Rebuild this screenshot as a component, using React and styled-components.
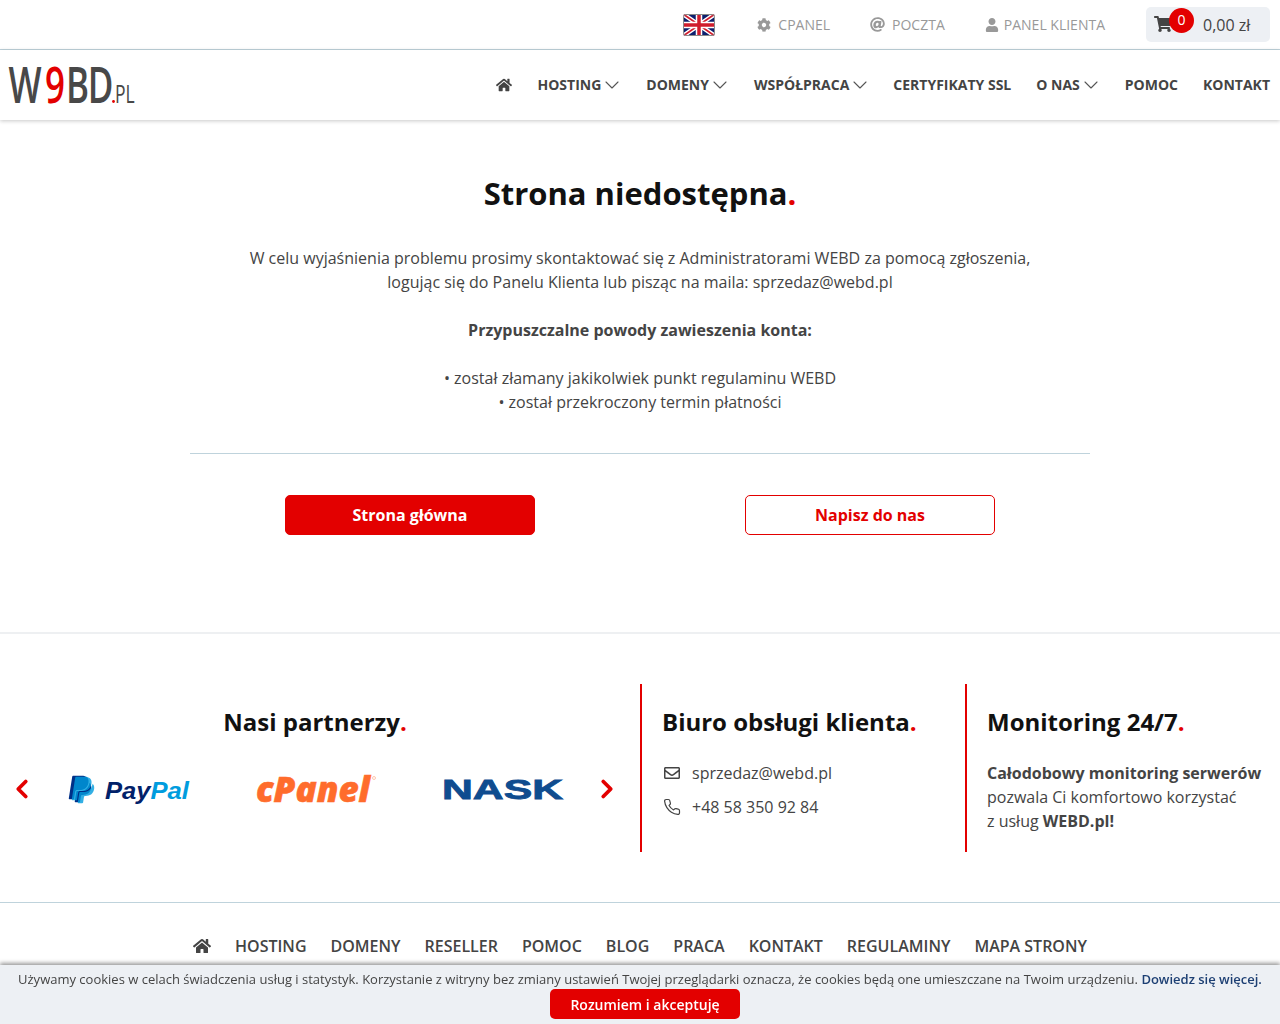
import React from 'react';
import styled, { createGlobalStyle } from 'styled-components';
import { FaHome, FaCog, FaAt, FaUser, FaShoppingCart, FaRegEnvelope, FaPaypal } from 'react-icons/fa';
import { FiChevronDown, FiPhone, FiChevronLeft, FiChevronRight } from 'react-icons/fi';

const RED = '#e30000';
const LINE = '#bfd3dc';

const GlobalStyle = createGlobalStyle`
	html, body { margin: 0; padding: 0; background: #fff; }
	body { font-family: "Open Sans", "Liberation Sans", sans-serif; font-size: 16px; line-height: 24px; color: #444; }
	* { box-sizing: border-box; }
`;

const TopBar = styled.div`
	height: 50px;
	border-bottom: 1px solid ${LINE};
	display: flex;
	justify-content: flex-end;
	align-items: center;
	padding-right: 10px;
`;

const Flag = styled.svg`
	width: 32px;
	height: 22px;
	margin-right: 42px;
	margin-top: 1px;
`;

const TopLink = styled.a`
	display: flex;
	align-items: center;
	gap: ${p => p.$gap || 7}px;
	font-size: 14px;
	color: #999;
	margin-right: ${p => p.$right || 40}px;
	svg { font-size: ${p => p.$icon || 14}px; }
`;

const Cart = styled.div`
	position: relative;
	width: 124px;
	height: 35px;
	margin-top: -1px;
	background: #edf0f4;
	border-radius: 5px;
	display: flex;
	align-items: center;
	padding-left: 8px;
	svg { font-size: 18px; color: #444; }
`;

const CartBadge = styled.span`
	position: absolute;
	left: 23px;
	top: 1px;
	width: 25px;
	height: 25px;
	border-radius: 50%;
	background: ${RED};
	color: #fff;
	font-size: 14px;
	display: flex;
	align-items: center;
	justify-content: center;
`;

const CartPrice = styled.span`
	margin-left: 31px;
	margin-top: 1px;
	font-size: 16px;
`;

const NavBar = styled.div`
	height: 70px;
	display: flex;
	align-items: center;
	justify-content: space-between;
	padding: 0 10px;
	box-shadow: 0 1px 4px rgba(0,0,0,.22);
	position: relative;
`;

const Logo = styled.svg`
	width: 126px;
	height: 70px;
	display: block;
	overflow: visible;
`;

const Nav = styled.nav`
	display: flex;
	align-items: center;
`;

const NavItem = styled.a`
	display: flex;
	align-items: center;
	font-size: 14px;
	font-weight: 700;
	color: #444;
	margin-left: ${p => p.$left || 25}px;
	svg { font-size: 16px; }
	svg.chev { margin-left: -1px; font-size: 24px; stroke-width: 1.1; color: #555; }
`;

const Main = styled.main`
	width: 900px;
	margin: 0 auto;
	padding-top: 52px;
	height: 512px;
	text-align: center;
`;

const Title = styled.h1`
	margin: 0 0 32px;
	font-size: 31px;
	line-height: 42px;
	font-weight: 700;
	color: #111;
`;

const Dot = styled.span`
	color: ${RED};
`;

const Para = styled.p`
	margin: 0 0 24px;
	b { font-weight: 700; }
`;

const Divider = styled.hr`
	border: 0;
	border-top: 1px solid ${LINE};
	margin: 39px 0 41px;
`;

const Buttons = styled.div`
	display: flex;
	justify-content: center;
	gap: 210px;
`;

const Button = styled.a`
	width: 250px;
	height: 40px;
	border-radius: 5px;
	border: 1px solid ${RED};
	background: ${p => p.$outline ? '#fff' : RED};
	color: ${p => p.$outline ? RED : '#fff'};
	font-weight: 700;
	font-size: 16px;
	display: flex;
	align-items: center;
	justify-content: center;
`;

const Info = styled.section`
	border-top: 2px solid #eef0f2;
	height: 270px;
	padding-top: 50px;
	display: grid;
	grid-template-columns: 640px 325px 1fr;
	align-items: start;
`;

const Column = styled.div`
	height: 168px;
	padding-left: 20px;
	border-left: 2px solid ${RED};
`;

const Heading = styled.h2`
	margin: 21px 0 22px;
	font-size: 24px;
	line-height: 34px;
	font-weight: 700;
	color: #111;
	text-align: ${p => p.$center ? 'center' : 'left'};
`;

const Partners = styled.div`
	height: 168px;
	padding-right: 10px;
`;

const Carousel = styled.div`
	display: grid;
	grid-template-columns: 44px 1fr 44px;
	align-items: center;
	height: 44px;
	margin: 28px 1px 0 0;
`;

const Arrow = styled.span`
	display: flex;
	justify-content: center;
	color: ${RED};
	svg { font-size: 30px; stroke-width: 3; }
`;

const Logos = styled.div`
	display: flex;
	justify-content: space-between;
	align-items: center;
	padding: 0 22px 0 25px;
`;

const LogoBox = styled.svg`
	width: 121px;
	height: 36px;
	display: block;
	overflow: visible;
`;

const ContactRow = styled.div`
	display: flex;
	align-items: center;
	height: 24px;
	margin-bottom: 10px;
	svg { width: 16px; height: 16px; margin: 0 12px 0 2px; color: #444; }
	svg.phone { width: 18px; height: 18px; margin: 0 11px 0 1px; stroke-width: 1.6; }
`;

const BlockText = styled.p`
	margin: 0;
	b { font-weight: 700; }
`;

const FooterNav = styled.footer`
	border-top: 1px solid ${LINE};
	height: 122px;
	display: flex;
	justify-content: center;
	gap: 24px;
	padding-top: 31px;
`;

const FooterLink = styled.a`
	font-size: 16px;
	font-weight: 600;
	color: #444;
	height: 24px;
	display: flex;
	align-items: center;
	svg { font-size: 18px; }
`;

const CookieBar = styled.div`
	position: fixed;
	left: 0;
	right: 0;
	bottom: 0;
	height: 59px;
	background: #edf0f4;
	box-shadow: 0 -2px 4px rgba(0,0,0,.4);
	text-align: center;
	font-size: 13px;
	line-height: 18px;
	padding-top: 5px;
	color: #444;
	a { color: #1d3f73; font-weight: 600; }
`;

const CookieButton = styled.button`
	display: block;
	width: 190px;
	height: 30px;
	margin: 1px auto 0 550px;
	background: ${RED};
	border: 0;
	border-radius: 5px;
	color: #fff;
	font-family: inherit;
	font-size: 14px;
	font-weight: 600;
`;

const UnionJack = () => (
	<Flag viewBox="0 0 32 22">
		<defs><clipPath id="flag-clip"><rect width="32" height="22" rx="3" /></clipPath></defs>
		<g clipPath="url(#flag-clip)">
			<rect width="32" height="22" fill="#0d1f6e" />
			<path d="M0 0L32 22M32 0L0 22" stroke="#fff" strokeWidth="4.5" />
			<path d="M0 0L32 22M32 0L0 22" stroke="#d01c2c" strokeWidth="1.8" />
			<path d="M16 0V22M0 11H32" stroke="#fff" strokeWidth="6.5" />
			<path d="M16 0V22M0 11H32" stroke="#d01c2c" strokeWidth="3.5" />
		</g>
		<rect x=".5" y=".5" width="31" height="21" rx="2.5" fill="none" stroke="#888" />
	</Flag>
);

// one text element, the tspans only set colour and place of each letter
const WebdLogo = () => (
	<Logo viewBox="0 0 126 70">
		<text transform="translate(0 53) scale(.7 1)" fontFamily="'Open Sans', sans-serif" fontWeight="600" fontSize="50" fill="#484848">
			<tspan x="-2">W</tspan>
			<tspan x="50" fill={RED}>9</tspan>
			<tspan x="80">B</tspan>
			<tspan x="111">D</tspan>
			<tspan x="150" fontSize="25" fontWeight="400">PL</tspan>
		</text>
		<circle cx="103.5" cy="51.5" r="1.4" fill={RED} />
	</Logo>
);

const PayPalLogo = () => (
	<LogoBox viewBox="0 0 121 36">
		<FaPaypal x="-4" y="3" size={30} color="#003087" />
		<FaPaypal x="-1" y="4" size={30} color="#009cde" opacity=".8" />
		<text x="36" y="28" fontFamily="'Liberation Sans', sans-serif" fontWeight="700" fontStyle="italic" fontSize="24" fill="#012169" textLength="84" lengthAdjust="spacingAndGlyphs">
			Pay<tspan fill="#009cde">Pal</tspan>
		</text>
	</LogoBox>
);

const CpanelLogo = () => (
	<LogoBox viewBox="0 0 121 36">
		<text x="0" y="31" textLength="114" lengthAdjust="spacingAndGlyphs" fontFamily="'Open Sans', sans-serif" fontWeight="800" fontStyle="italic" fontSize="36" stroke="#ff6c2c" strokeWidth=".6" fill="#ff6c2c">cPanel</text>
		<circle cx="118" cy="7" r="1.5" fill="none" stroke="#ffb08c" strokeWidth=".7" />
	</LogoBox>
);

const NaskLogo = () => (
	<LogoBox viewBox="0 0 121 36">
		<text x="0" y="28" textLength="121" lengthAdjust="spacingAndGlyphs" fontFamily="'Liberation Sans', sans-serif" fontWeight="700" fontSize="28" stroke="#0f4c8f" strokeWidth=".8" fill="#0f4c8f">NASK</text>
	</LogoBox>
);

const Chevron = () => <FiChevronDown className="chev" />;

export default function App() {
	return (
		<>
			<GlobalStyle />
			<TopBar>
				<UnionJack />
				<TopLink><FaCog />CPANEL</TopLink>
				<TopLink $icon={15}><FaAt />POCZTA</TopLink>
				<TopLink $gap={5} $right={41}><FaUser />PANEL KLIENTA</TopLink>
				<Cart>
					<FaShoppingCart />
					<CartBadge>0</CartBadge>
					<CartPrice>0,00 zł</CartPrice>
				</Cart>
			</TopBar>
			<NavBar>
				<WebdLogo />
				<Nav>
					<NavItem><FaHome /></NavItem>
					<NavItem>HOSTING<Chevron /></NavItem>
					<NavItem $left={22}>DOMENY<Chevron /></NavItem>
					<NavItem $left={22}>WSPÓŁPRACA<Chevron /></NavItem>
					<NavItem $left={21}>CERTYFIKATY SSL</NavItem>
					<NavItem>O NAS<Chevron /></NavItem>
					<NavItem $left={22}>POMOC</NavItem>
					<NavItem>KONTAKT</NavItem>
				</Nav>
			</NavBar>
			<Main>
				<Title>Strona niedostępna<Dot>.</Dot></Title>
				<Para>
					W celu wyjaśnienia problemu prosimy skontaktować się z Administratorami WEBD za pomocą zgłoszenia,<br />
					logując się do Panelu Klienta lub pisząc na maila: sprzedaz@webd.pl
				</Para>
				<Para><b>Przypuszczalne powody zawieszenia konta:</b></Para>
				<Para>
					• został złamany jakikolwiek punkt regulaminu WEBD<br />
					• został przekroczony termin płatności
				</Para>
				<Divider />
				<Buttons>
					<Button>Strona główna</Button>
					<Button $outline>Napisz do nas</Button>
				</Buttons>
			</Main>
			<Info>
				<Partners>
					<Heading $center>Nasi partnerzy<Dot>.</Dot></Heading>
					<Carousel>
						<Arrow><FiChevronLeft /></Arrow>
						<Logos>
							<PayPalLogo />
							<CpanelLogo />
							<NaskLogo />
						</Logos>
						<Arrow><FiChevronRight /></Arrow>
					</Carousel>
				</Partners>
				<Column>
					<Heading>Biuro obsługi klienta<Dot>.</Dot></Heading>
					<ContactRow><FaRegEnvelope />sprzedaz@webd.pl</ContactRow>
					<ContactRow><FiPhone className="phone" />+48 58 350 92 84</ContactRow>
				</Column>
				<Column>
					<Heading>Monitoring 24/7<Dot>.</Dot></Heading>
					<BlockText>
						<b>Całodobowy monitoring serwerów</b><br />
						pozwala Ci komfortowo korzystać<br />
						z usług <b>WEBD.pl!</b>
					</BlockText>
				</Column>
			</Info>
			<FooterNav>
				<FooterLink><FaHome /></FooterLink>
				<FooterLink>HOSTING</FooterLink>
				<FooterLink>DOMENY</FooterLink>
				<FooterLink>RESELLER</FooterLink>
				<FooterLink>POMOC</FooterLink>
				<FooterLink>BLOG</FooterLink>
				<FooterLink>PRACA</FooterLink>
				<FooterLink>KONTAKT</FooterLink>
				<FooterLink>REGULAMINY</FooterLink>
				<FooterLink>MAPA STRONY</FooterLink>
			</FooterNav>
			<CookieBar>
				Używamy cookies w celach świadczenia usług i statystyk. Korzystanie z witryny bez zmiany ustawień Twojej przeglądarki oznacza, że cookies będą one umieszczane na Twoim urządzeniu. <a>Dowiedz się więcej.</a>
				<CookieButton>Rozumiem i akceptuję</CookieButton>
			</CookieBar>
		</>
	);
}
